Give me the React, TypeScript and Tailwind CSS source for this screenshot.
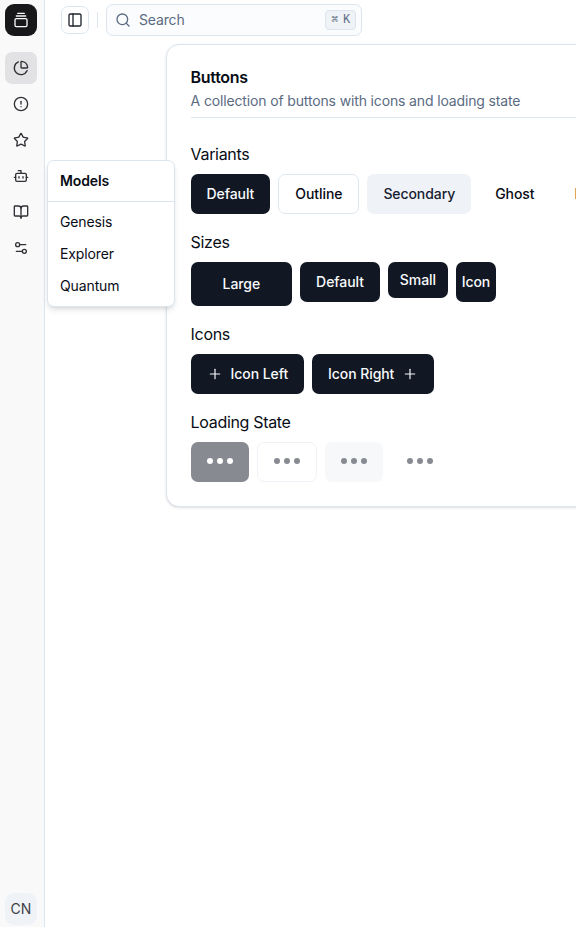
import React from "react";
import {
  BookOpen, Bot, ChartPie, CircleAlert, GalleryVerticalEnd, PanelLeft, Plus, Search, Settings2, Star,
} from "lucide-react";

const navItems = [ChartPie, CircleAlert, Star, Bot, BookOpen, Settings2];

const variants = {
  default: "bg-[#111824] text-[#f8fafc]",
  outline: "border border-[#dfe7ef] bg-white text-[#080c16]",
  secondary: "bg-[#eff2f7] text-[#182030]",
  ghost: "text-[#080c16]",
};
const sizes = {
  default: "h-10 px-4",
  lg: "h-11 px-8",
  sm: "h-9 px-3",
  icon: "h-10 w-10",
};

type ButtonProps = {
  variant?: keyof typeof variants;
  size?: keyof typeof sizes;
  loading?: boolean;
  children?: React.ReactNode;
};

function Button({ variant = "default", size = "default", loading, children }: ButtonProps) {
  return (
    <button
      className={`flex shrink-0 items-center justify-center rounded-[7px] text-sm font-medium tracking-[-0.08px] whitespace-nowrap ${variants[variant]} ${sizes[size]} ${loading ? "opacity-50" : ""}`}
    >
      {loading ? <Dots light={variant === "default"} /> : children}
    </button>
  );
}

function Dots({ light }: { light: boolean }) {
  const dot = `size-1.5 rounded-full ${light ? "bg-white" : "bg-[#111824]"}`;
  return (
    <span className="mb-[3px] flex gap-1">
      <span className={dot} />
      <span className={dot} />
      <span className={dot} />
    </span>
  );
}

function Section({ title, children }: { title: string; children: React.ReactNode }) {
  return (
    <section className="flex flex-col gap-2">
      <h3 className="text-base leading-6 tracking-[-0.32px]">{title}</h3>
      <div className="flex items-start gap-2">{children}</div>
    </section>
  );
}

export default function App() {
  return (
    <div className="relative flex h-[927px] w-full overflow-hidden bg-white font-['Inter',sans-serif] text-[#080c16]">
      <aside className="flex w-[45px] shrink-0 flex-col border-r border-[#dce5ee] bg-[#f9f9f9] pt-1 pb-0.5 pl-[5px]">
        <div className="flex size-8 items-center justify-center rounded-[9px] bg-[#18181b] text-[#fafafa]">
          <GalleryVerticalEnd size={16} />
        </div>
        <nav className="mt-4 flex flex-1 flex-col gap-1">
          {navItems.map((Icon, i) => (
            <button
              key={i}
              className={`flex size-8 items-center justify-center rounded-[7px] text-[#303036] ${i === 0 ? "bg-[#e2e2e4]" : ""}`}
            >
              <Icon size={16} />
            </button>
          ))}
        </nav>
        <div className="flex size-8 items-center justify-center rounded-[9px] bg-[#eff2f7] text-sm text-[#3f3f46]">CN</div>
      </aside>

      <main className="flex min-w-0 flex-1 flex-col">
        <header className="flex h-10 shrink-0 items-center pl-4">
          <button className="flex size-7 items-center justify-center rounded-[7px] border border-[#dce5ee] text-[#20242e]">
            <PanelLeft size={16} />
          </button>
          <div className="ml-2 h-4 w-px bg-[#dce5ee]" />
          <div className="ml-2 flex h-8 w-64 items-center rounded-[7px] border border-[#dce5ee] bg-[#fbfcfe] pr-[5px] pl-2 text-sm text-[#5b6b82]">
            <Search size={16} />
            <span className="ml-2 flex-1 tracking-[-0.14px]">Search</span>
            <kbd className="flex h-5 w-[31px] items-center justify-center gap-1 rounded border border-[#dce5ee] bg-[#eff2f7] font-['Liberation_Mono','DejaVu_Sans_Mono',monospace] text-[12px] leading-4">
              <span className="w-2 text-center text-[11px]">⌘</span>
              <span>K</span>
            </kbd>
          </div>
        </header>

        <div className="mt-1 ml-[121px] flex h-[463px] w-[700px] shrink-0 flex-col rounded-[13px] border border-[#dce5ee] bg-white pr-6 pl-[23.6px] pt-5 shadow-sm">
          <div className="border-b border-[#dfe7ef] pb-1.5">
            <h2 className="text-base leading-6 font-semibold tracking-[-0.32px]">Buttons</h2>
            <p className="mt-0.5 text-sm leading-5 tracking-[-0.145px] text-[#5b6b82]">A collection of buttons with icons and loading state</p>
          </div>
          <div className="mt-6 flex flex-col gap-4">
            <Section title="Variants">
              <Button>Default</Button>
              <Button variant="outline">Outline</Button>
              <Button variant="secondary">Secondary</Button>
              <Button variant="ghost">Ghost</Button>
              <Button variant="ghost">Link</Button>
            </Section>
            <Section title="Sizes">
              <Button size="lg">Large</Button>
              <Button>Default</Button>
              <Button size="sm">Small</Button>
              <Button size="icon">Icon</Button>
            </Section>
            <Section title="Icons">
              <Button><Plus size={16} strokeWidth={1.75} className="mr-2" />Icon Left</Button>
              <Button>Icon Right<Plus size={16} strokeWidth={1.75} className="ml-2" /></Button>
            </Section>
            <Section title="Loading State">
              <Button loading />
              <Button loading variant="outline" />
              <Button loading variant="secondary" />
              <Button loading variant="ghost" />
            </Section>
          </div>
        </div>
      </main>

      <div className="absolute top-[160px] left-[47px] w-32 rounded-[7px] border border-[#dce5ee] bg-white text-sm tracking-[-0.12px] shadow-md">
        <div className="flex h-[41px] items-center border-b border-[#dce5ee] px-3 font-semibold">Models</div>
        <ul className="flex flex-col py-1">
          {["Genesis", "Explorer", "Quantum"].map((m) => (
            <li key={m} className="flex h-8 items-center px-3">{m}</li>
          ))}
        </ul>
      </div>
    </div>
  );
}
